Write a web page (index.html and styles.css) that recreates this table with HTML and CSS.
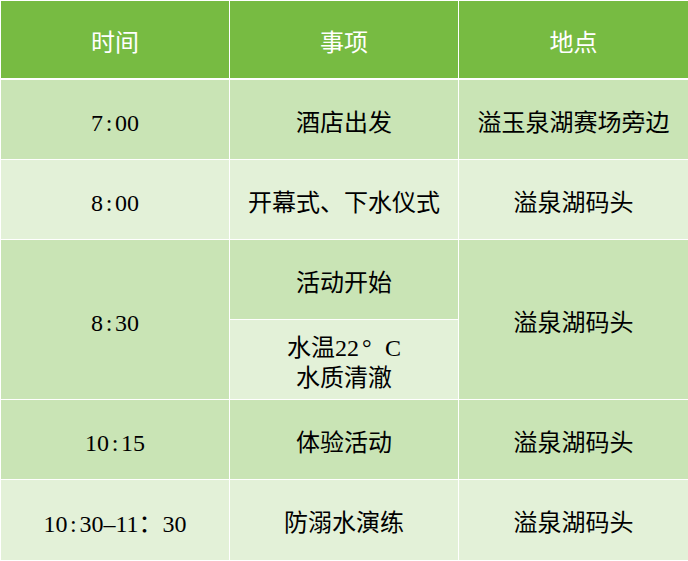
FILE: index.html
```html
<!DOCTYPE html>
<html lang="zh">
<head>
<meta charset="utf-8">
<link rel="stylesheet" href="styles.css">
</head>
<body>
<table class="schedule">
  <colgroup><col class="c1"><col class="c2"><col class="c3"></colgroup>
  <thead>
    <tr class="head"><th>时间</th><th>事项</th><th>地点</th></tr>
  </thead>
  <tbody>
    <tr class="dark"><td>7<span class="p">:</span>00</td><td>酒店出发</td><td>溢玉泉湖赛场旁边</td></tr>
    <tr class="light"><td>8<span class="p">:</span>00</td><td>开幕式、下水仪式</td><td>溢泉湖码头</td></tr>
    <tr class="dark"><td rowspan="2">8<span class="p">:</span>30</td><td>活动开始</td><td rowspan="2">溢泉湖码头</td></tr>
    <tr class="light"><td>水温22<span class="deg">°</span>C<br>水质清澈</td></tr>
    <tr class="dark"><td>10<span class="p">:</span>15</td><td>体验活动</td><td>溢泉湖码头</td></tr>
    <tr class="light last"><td>10<span class="p">:</span>30<span class="p">–</span>11<span class="fw">：</span>30</td><td>防溺水演练</td><td>溢泉湖码头</td></tr>
  </tbody>
</table>
</body>
</html>
```
FILE: styles.css
```css
html, body { margin: 0; padding: 0; background: #ffffff; }
.schedule {
  width: 688px;
  border-collapse: collapse;
  table-layout: fixed;
  font-family: "Liberation Serif", "Noto Sans CJK SC", serif;
  font-size: 24px;
  color: #000;
  border-left: 1px solid #d4d4d4;
  border-top: 1px solid #d4d4d4;
}
.c1 { width: 229px; }
.c2 { width: 229px; }
.c3 { width: 230px; }
.schedule th, .schedule td {
  text-align: center;
  vertical-align: middle;
  padding: 6px 0 0 0;
  border: 1px solid #ffffff;
  height: 73px;
  line-height: 30px;
}
.schedule th {
  background: #77bb42;
  color: #ffffff;
  font-weight: normal;
  height: 71px;
  border-bottom: 2px solid #ffffff;
}
.dark td { background: #c9e4b5; }
.light td { background: #e3f1d8; }
.last td { height: 74px; }
.p {
  display: inline-block;
  width: 12px;
  text-align: center;
}
.fw {
  display: inline-block;
  width: 24px;
  text-align: left;
  font-family: "Noto Sans CJK SC", sans-serif;
}
.deg {
  display: inline-block;
  width: 26px;
  text-align: left;
  padding-left: 3px;
  box-sizing: border-box;
}
```
